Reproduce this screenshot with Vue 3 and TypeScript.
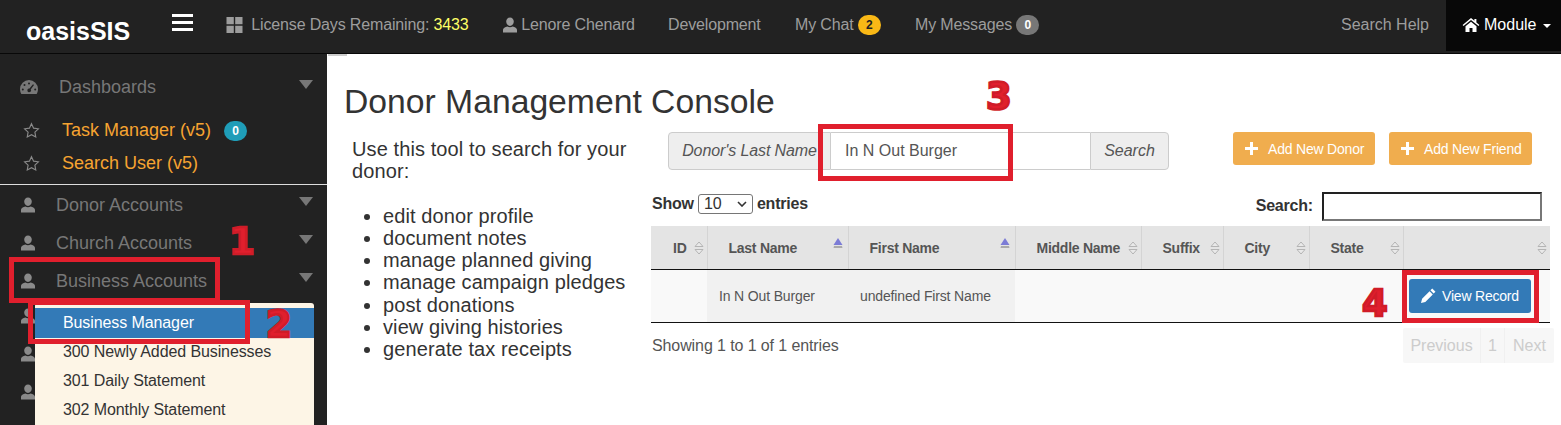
<script setup lang="ts">
interface Column { label: string; cls: string; sorted?: boolean }
const columns: Column[] = [
  { label: 'ID', cls: 'c-id' },
  { label: 'Last Name', cls: 'c-last', sorted: true },
  { label: 'First Name', cls: 'c-first', sorted: true },
  { label: 'Middle Name', cls: 'c-mid' },
  { label: 'Suffix', cls: 'c-suf' },
  { label: 'City', cls: 'c-city' },
  { label: 'State', cls: 'c-state' },
  { label: '', cls: 'c-act' },
]
const accounts = ['Donor Accounts', 'Church Accounts', 'Business Accounts']
const favourites = ['Task Manager (v5)', 'Search User (v5)']
const subMenu = ['300 Newly Added Businesses', '301 Daily Statement', '302 Monthly Statement']
const uses = [
  'edit donor profile', 'document notes', 'manage planned giving', 'manage campaign pledges',
  'post donations', 'view giving histories', 'generate tax receipts',
]
const userPath = 'M8 .5c2.200 0 3.800 1.700 3.800 4.100S10.200 8.900 8 8.900 4.200 7 4.200 4.600 5.800.5 8 .5zM1 15.500v-2.700c0-1.700 2-2.700 4.400-3.300.7.500 1.600.8 2.600.8s1.900-.3 2.600-.8c2.400.6 4.400 1.600 4.400 3.300v2.700z'
</script>

<template>
  <div class="page">
    <header class="topbar">
      <div class="brand">oasisSIS</div>
      <div class="burger"><i></i><i></i><i></i></div>
      <nav class="nav-left">
        <span class="nav-item license">
          <svg class="ic-grid" viewBox="0 0 16 16"><path d="M0 0h7.300v7.300H0zM8.700 0H16v7.300H8.700zM0 8.700h7.300V16H0zM8.700 8.700H16V16H8.700z" /></svg>
          License Days Remaining: <b class="days">3433</b>
        </span>
        <span class="nav-item user">
          <svg class="ic-user" viewBox="0 0 16 16"><path :d="userPath" /></svg>
          Lenore Chenard
        </span>
        <span class="nav-item dev">Development</span>
        <span class="nav-item chat">My Chat <em class="pill pill-amber">2</em></span>
        <span class="nav-item msg">My Messages <em class="pill pill-gray">0</em></span>
      </nav>
      <span class="help">Search Help</span>
      <div class="module">
        <svg class="ic-home" viewBox="0 0 18 16"><path d="M9 1 0.600 8l.9 1L9 3l7.500 6 .9-1-3-2.500V2h-2v1.800zM3.500 9.200 9 4.700l5.500 4.500V15h-4v-4h-3v4h-4z" /></svg>
        Module
        <i class="caret"></i>
      </div>
    </header>

    <div class="body">
      <aside class="sidebar">
        <div class="side-row dash">
          <svg class="ic-gauge" viewBox="0 0 18 14"><path fill-rule="evenodd" d="M9 0a9 9 0 0 1 9 9c0 1.800-.4 3.500-1.300 5H1.300A9.600 9.600 0 0 1 0 9a9 9 0 0 1 9-9zM9 2.500a1 1 0 1 0 0 2 1 1 0 0 0 0-2zM4.500 4a1 1 0 1 0 0 2 1 1 0 0 0 0-2zM13 4.200 9.500 8.600a1.800 1.800 0 1 0 1.200.8L14 5zM2.800 8.500a1 1 0 1 0 0 2 1 1 0 0 0 0-2zM15.200 8.500a1 1 0 1 0 0 2 1 1 0 0 0 0-2z" /></svg>
          <span>Dashboards</span>
          <i class="tri"></i>
        </div>
        <ul class="favs">
          <li v-for="(f, i) in favourites" :key="f">
            <svg class="ic-star" viewBox="0 0 18 18"><path d="M9 1.800l2.200 4.700 5.100.7-3.700 3.600.9 5.100L9 13.500l-4.500 2.400.9-5.100L1.700 7.200l5.100-.7z" /></svg>
            <a>{{ f }}</a>
            <em v-if="i === 0" class="pill pill-teal">0</em>
          </li>
        </ul>
        <hr class="side-rule" />
        <div v-for="a in accounts" :key="a" class="side-row acct">
          <svg class="ic-user side" viewBox="0 0 16 16"><path :d="userPath" /></svg>
          <span>{{ a }}</span>
          <i class="tri"></i>
        </div>
        <div class="flyout-wrap">
          <div class="ghosts">
            <svg v-for="n in 3" :key="n" class="ic-user side" viewBox="0 0 16 16"><path :d="userPath" /></svg>
          </div>
          <div class="flyout">
            <div class="fly-active">Business Manager</div>
            <div v-for="s in subMenu" :key="s" class="fly-item">{{ s }}</div>
          </div>
        </div>
      </aside>

      <main class="main">
        <i class="scrap"></i>
        <h1>Donor Management Console</h1>
        <div class="columns">
          <section class="intro">
            <p>Use this tool to search for your donor:</p>
            <ul>
              <li v-for="u in uses" :key="u">{{ u }}</li>
            </ul>
          </section>
          <section class="work">
            <div class="tools">
              <div class="input-group">
                <span class="addon first">Donor's Last Name</span>
                <div class="value">In N Out Burger</div>
                <span class="addon last">Search</span>
              </div>
              <button class="btn-add one"><span class="plus"></span>Add New Donor</button>
              <button class="btn-add two"><span class="plus"></span>Add New Friend</button>
            </div>
            <div class="dt-controls">
              <div class="length">
                Show
                <span class="select">10<svg viewBox="0 0 10 6"><path d="M1 1l4 4 4-4" /></svg></span>
                entries
              </div>
              <div class="filter">Search: <span class="filter-box"></span></div>
            </div>
            <table class="grid">
              <thead>
                <tr>
                  <th v-for="c in columns" :key="c.cls" :class="c.cls">
                    {{ c.label }}
                    <svg v-if="c.sorted" class="sort on" viewBox="0 0 10 12"><path class="up" d="M5 0l4.500 7h-9z" /><path class="dn" d="M1 8h8l.5 2H.5z" /></svg>
                    <svg v-else class="sort" viewBox="0 0 10 14"><path d="M5 1l4 4.500H1zM1 8.500h8L5 13z" /></svg>
                  </th>
                </tr>
              </thead>
              <tbody>
                <tr>
                  <td></td>
                  <td class="hl">In N Out Burger</td>
                  <td class="hl">undefined First Name</td>
                  <td></td><td></td><td></td><td></td>
                  <td class="act">
                    <button class="btn-view">
                      <svg viewBox="0 0 14 14"><path d="M10.500 0.500l3 3-1.700 1.700-3-3zM8 3l3 3-7 7-4 1 1-4z" /></svg>
                      View Record
                    </button>
                  </td>
                </tr>
              </tbody>
            </table>
            <div class="dt-foot">
              <span class="info">Showing 1 to 1 of 1 entries</span>
              <div class="pager"><span>Previous</span><span>1</span><span>Next</span></div>
            </div>
          </section>
        </div>
      </main>
    </div>

    <div class="mark box-1"></div>
    <div class="mark box-2"></div>
    <div class="mark box-3"></div>
    <div class="mark box-4"></div>
    <span class="num n1">1</span>
    <span class="num n2">2</span>
    <span class="num n3">3</span>
    <span class="num n4">4</span>
  </div>
</template>

<style>
html, body { margin: 0; background: #fff; }
</style>

<style scoped>
* { box-sizing: border-box; }
.page {
  position: relative;
  width: 1561px;
  height: 425px;
  overflow: hidden;
  display: flex;
  flex-direction: column;
  font-family: "Liberation Sans", Arial, sans-serif;
  color: #333;
  background: #fff;
}

/* top bar */
.topbar {
  flex: 0 0 54px;
  display: flex;
  align-items: flex-start;
  background: #222;
  border-bottom: 1px solid #080808;
  color: #9d9d9d;
  font-size: 16px;
}
.brand {
  width: 146px;
  padding: 15px 0 0 26px;
  color: #fff;
  font-size: 25px;
  font-weight: 700;
  line-height: 32px;
}
.burger { width: 80px; padding: 14px 0 0 26px; }
.burger i { display: block; width: 21px; height: 3px; margin-bottom: 4px; background: #fff; }
.nav-left { display: flex; line-height: 20px; padding-top: 15px; letter-spacing: -.15px; }
.nav-item { display: flex; align-items: center; white-space: pre; }
.license { width: 276px; }
.user { width: 166px; }
.dev { width: 127px; }
.chat { width: 120px; }
.ic-grid { width: 17px; height: 16px; margin-right: 4px; fill: #9d9d9d; }
.ic-user { width: 16px; height: 16px; margin-right: -1px; fill: #9d9d9d; }
.days { font-weight: 400; color: #ffff66; }
.pill {
  display: inline-block;
  min-width: 23px;
  height: 20px;
  border-radius: 10px;
  text-align: center;
  font-style: normal;
  font-weight: 700;
  font-size: 12px;
  line-height: 20px;
  letter-spacing: 0;
}
.pill-amber { background: #f9b816; color: #222; }
.pill-gray { background: #777; color: #fff; }
.pill-teal { background: #1f9db8; color: #fff; margin-left: 13px; }
.help { margin-left: auto; padding: 15px 17px 0 0; line-height: 20px; }
.module {
  width: 115px;
  height: 51px;
  padding: 15px 0 0 16px;
  display: flex;
  align-items: flex-start;
  background: #080808;
  color: #fff;
  line-height: 20px;
}
.ic-home { width: 18px; height: 16px; margin: 2px 4px 0 0; fill: #fff; }
.caret {
  margin: 9px 0 0 7px;
  border-top: 4px solid #fff;
  border-left: 4px solid transparent;
  border-right: 4px solid transparent;
}

.body { flex: 1; display: flex; min-height: 0; }

/* sidebar */
.sidebar { flex: 0 0 327px; padding-top: 15px; background: #222; color: #777; font-size: 18px; }
.side-row { position: relative; display: flex; align-items: center; height: 38px; }
.dash { height: 36px; padding-left: 20px; margin-bottom: 9px; }
.dash span { margin-left: 21px; }
.ic-gauge { width: 18px; height: 14px; fill: #777; }
.tri {
  position: absolute;
  right: 14px;
  top: 11px;
  border-top: 9px solid #777;
  border-left: 7px solid transparent;
  border-right: 7px solid transparent;
}
.favs { list-style: none; margin: 0; padding: 0 0 0 23px; color: #f6a431; }
.favs li { display: flex; align-items: center; height: 33px; }
.favs a { margin-left: 22px; }
.ic-star { width: 17px; height: 17px; fill: none; stroke: #8a8a8a; stroke-width: 1.200; }
.side-rule { height: 1px; margin: 4px 0 1px; border: 0; background: #ddd; }
.acct { padding-left: 20px; }
.acct span { margin-left: 20px; }
.ic-user.side { width: 16px; height: 16px; margin: 0; fill: #8a8a8a; }
.flyout-wrap { position: relative; height: 130px; }
.ghosts { position: absolute; left: 20px; top: 8px; display: flex; flex-direction: column; gap: 22px; }
.flyout {
  position: absolute;
  left: 35px;
  top: 3px;
  width: 279px;
  padding-top: 5px;
  height: 130px;
  background: #fdf5e6;
  border-radius: 3px 3px 0 0;
  color: #333;
  font-size: 16px;
}
.fly-active { height: 30px; padding-left: 28px; line-height: 30px; background: #337ab7; color: #fff; letter-spacing: -.1px; }
.fly-item { height: 29px; padding-left: 28px; line-height: 28px; letter-spacing: -.1px; }

/* main */
.main { position: relative; flex: 1; min-width: 0; padding: 0 0 0 17px; }
.scrap { position: absolute; left: 1px; top: 0; width: 19px; height: 2px; background: #ccc; }
h1 { margin: 27px 0 0; font-size: 33.700px; font-weight: 400; line-height: 40px; color: #333; }
.columns { display: flex; margin-top: 11px; }
.intro { flex: 0 0 307px; padding: 0 0 0 8px; font-size: 20px; line-height: 22.100px; color: #333; letter-spacing: .1px; }
.intro p { margin: 6px 0 23px; width: 290px; }
.intro ul { margin: 0; padding: 0 0 0 31px; }
.work { flex: 1; min-width: 0; }
.tools { display: flex; align-items: flex-start; padding-left: 17px; height: 53px; }
.input-group { display: flex; width: 501px; height: 38px; font-size: 16px; }
.addon {
  display: flex;
  align-items: center;
  justify-content: center;
  border: 1px solid #ccc;
  background: #eee;
  color: #555;
  font-style: italic;
}
.addon.first { width: 163px; border-radius: 4px 0 0 4px; white-space: nowrap; letter-spacing: -.1px; }
.addon.last { width: 79px; border-left: 1px solid #ccc; border-radius: 0 4px 4px 0; }
.value {
  flex: 1;
  padding: 0 14px;
  line-height: 36px;
  border-top: 1px solid #ccc;
  border-bottom: 1px solid #ccc;
  color: #555;
}
.btn-add {
  display: flex;
  align-items: center;
  height: 33px;
  padding: 0 0 0 12px;
  border: 0;
  border-radius: 3px;
  background: #f0ad4e;
  color: #fff;
  font: 14px "Liberation Sans", Arial, sans-serif;
  letter-spacing: -.2px;
  white-space: nowrap;
}
.btn-add.one { width: 142px; margin-left: 64px; }
.btn-add.two { width: 143px; margin-left: 14px; }
.plus { position: relative; width: 13px; height: 13px; margin-right: 10px; }
.plus::before, .plus::after { content: ""; position: absolute; background: #fff; }
.plus::before { left: 0; right: 0; top: 5px; height: 3px; }
.plus::after { top: 0; bottom: 0; left: 5px; width: 3px; }
.dt-controls { display: flex; justify-content: space-between; height: 41px; font-size: 16px; font-weight: 700; letter-spacing: -.2px; }
.length { display: flex; gap: 4px; align-items: center; height: 20px; padding: 0 0 0 1px; margin-top: 9px; }
.select {
  display: flex;
  align-items: center;
  justify-content: space-between;
  width: 55px;
  height: 20px;
  padding: 0 5px;
  border: 1px solid #767676;
  border-radius: 3px;
  font-weight: 400;
  letter-spacing: 0;
}
.select svg { width: 10px; height: 6px; fill: none; stroke: #333; stroke-width: 1.600; }
.filter { display: flex; align-items: center; gap: 9px; height: 30px; margin: 6px 19px 0 0; }
.filter-box { width: 220px; height: 29px; border: 2px solid; border-color: #222 #777 #777 #222; background: #fff; }
.grid {
  width: 899px;
  table-layout: fixed;
  border-collapse: collapse;
  font-size: 14px;
  color: #555;
}
.grid th {
  position: relative;
  height: 43px;
  padding: 1px 0 0 21px;
  background: #e4e4e4;
  border-right: 1px solid #d4d4d4;
  border-bottom: 1px solid #111;
  text-align: left;
  font-weight: 700;
  letter-spacing: -.25px;
}
.grid th:last-child { border-right: 0; }
.grid th.c-id { padding-left: 22px; }
.c-id { width: 56px; }
.c-last { width: 141px; }
.c-first { width: 167px; }
.c-mid { width: 126px; }
.c-suf { width: 82px; }
.c-city { width: 86px; }
.c-state { width: 94px; }
.c-act { width: 147px; }
.sort { position: absolute; right: 3px; top: 15px; width: 10px; height: 14px; fill: #e9e9e9; stroke: #b4b4b4; stroke-width: 1; }
.sort.on { right: 5px; top: 12px; height: 12px; stroke: none; }
.sort .up { fill: #7c7cd6; }
.sort .dn { fill: #aaa; }
.grid td {
  height: 53px;
  padding: 0 0 0 12px;
  background: #f9f9f9;
  border-bottom: 1px solid #111;
  white-space: nowrap;
  letter-spacing: -.15px;
}
.grid td.hl { background: #f1f1f1; padding-left: 12px; }
.grid td.act { padding: 0 0 0 6px; }
.btn-view {
  display: flex;
  align-items: center;
  width: 122px;
  height: 34px;
  padding: 0 0 0 12px;
  border: 0;
  border-radius: 3px;
  background: #337ab7;
  color: #fff;
  font: 14px "Liberation Sans", Arial, sans-serif;
  letter-spacing: -.2px;
}
.btn-view svg { width: 15px; height: 15px; margin-right: 6px; fill: #fff; }
.dt-foot { display: flex; justify-content: space-between; padding: 5px 0 0 1px; width: 903px; }
.info { margin-top: 9px; font-size: 16px; color: #555; letter-spacing: -.1px; }
.pager { display: flex; width: 151px; height: 35px; background: #f7f7f7; border-radius: 2px; font-size: 16px; color: #ccc; line-height: 35px; text-align: center; }
.pager span { flex: 0 0 24px; border-right: 1px solid #f0f0f0; }
.pager span:first-child { flex-basis: 78px; }
.pager span:last-child { flex-basis: 49px; border-right: 0; }

/* annotations drawn over the screenshot */
.mark { position: absolute; border: 5px solid #e01f2d; }
.box-1 { left: 9px; top: 257px; width: 211px; height: 46px; }
.box-2 { left: 28px; top: 300px; width: 222px; height: 44px; }
.box-3 { left: 818px; top: 124px; width: 195px; height: 57px; }
.box-4 { left: 1402px; top: 270px; width: 137px; height: 53px; }
.num {
  position: absolute;
  font-family: "DejaVu Sans", sans-serif;
  font-weight: 700;
  font-size: 37px;
  line-height: 40px;
  color: #e01f2d;
  -webkit-text-stroke: 2.500px #d01c28;
}
.n1 { left: 229px; top: 222px; }
.n2 { left: 266px; top: 305px; }
.n3 { left: 986px; top: 77px; }
.n4 { left: 1362px; top: 284px; }
</style>
